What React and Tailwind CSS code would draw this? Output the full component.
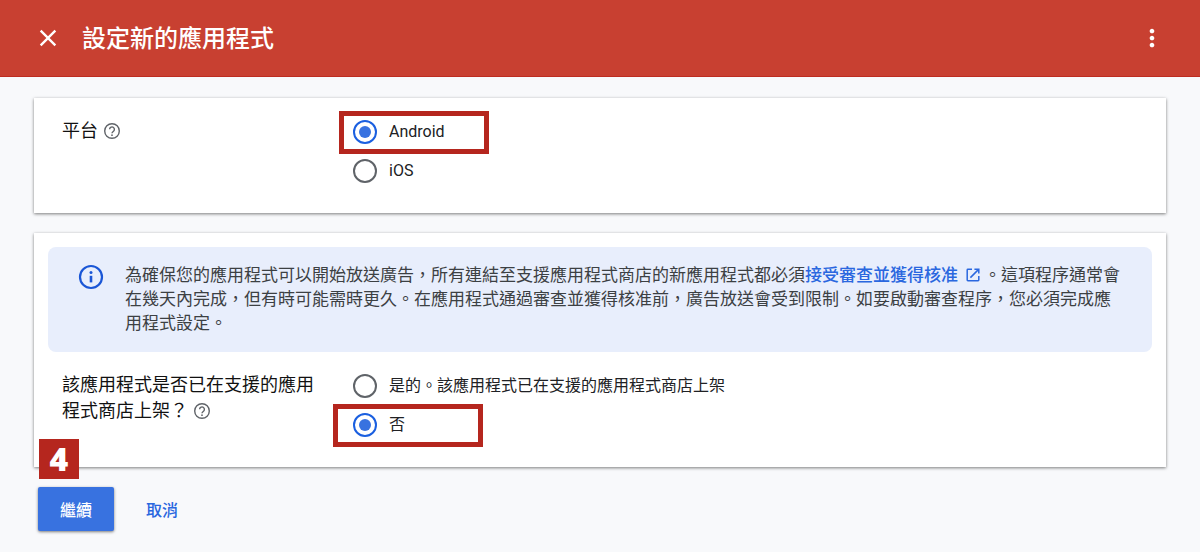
import { useState } from 'react';
import { MdClose, MdMoreVert } from 'react-icons/md';

function HelpIcon() {
  return (
    <svg viewBox="0 0 20 20" className="size-5" fill="none" stroke="currentColor" strokeWidth="1.4" aria-hidden="true">
      <circle cx="10" cy="10" r="7.3" />
      <path d="M7.6 8.3a2.4 2.4 0 1 1 4.1 1.7c-.9.8-1.7 1.2-1.7 2.3" />
      <circle cx="10" cy="14.2" r="0.85" fill="currentColor" stroke="none" />
    </svg>
  );
}

function InfoIcon() {
  return (
    <svg viewBox="0 0 28 28" className="size-7 shrink-0 text-[#1a56d6]" fill="none" stroke="currentColor" strokeWidth="2.2" aria-hidden="true">
      <circle cx="14" cy="14" r="11" />
      <path d="M14 12.8v6.6" strokeWidth="2.6" />
      <circle cx="14" cy="9.6" r="1.5" fill="currentColor" stroke="none" />
    </svg>
  );
}

function OpenIcon() {
  return (
    <svg viewBox="0 0 14 14" className="mr-1 ml-2 inline-block size-[14px] align-[-1px]" fill="none" stroke="currentColor" strokeWidth="1.5" aria-hidden="true">
      <path d="M6 1.2H1.9a.7.7 0 0 0-.7.7v10.2c0 .4.3.7.7.7h10.2c.4 0 .7-.3.7-.7V8" />
      <path d="M8.4 1.2h4.4v4.4M12.6 1.4 4.4 9.6" />
    </svg>
  );
}

function Radio({ name, value, selected, onSelect, children }) {
  return (
    <label className="flex h-6 w-fit items-center gap-3 text-[16px] leading-6 text-[#202124]">
      <input
        type="radio"
        name={name}
        value={value}
        checked={selected === value}
        onChange={() => onSelect(value)}
        className="size-6 shrink-0 appearance-none rounded-full border-2 border-[#5f6368] bg-clip-content p-1 checked:border-[#1a5fe0] checked:bg-[#3872e0]"
      />
      {children}
    </label>
  );
}

function Highlight() {
  return <div aria-hidden="true" className="pointer-events-none h-[43px] w-[150px] border-5 border-[#b5261e]" />;
}

function Help() {
  return (
    <button type="button" aria-label="說明" className="ml-1 inline-block align-[-4px] leading-none text-[#5f6368]">
      <HelpIcon />
    </button>
  );
}

function Card({ children }) {
  return (
    <section className="relative bg-white shadow-[0_1px_3px_rgba(0,0,0,0.5)]">{children}</section>
  );
}

function Field({ label, labelId, children }) {
  return (
    <div className="grid grid-cols-[267px_1fr] gap-6 px-7">
      <div id={labelId} className="text-[18px] leading-[26px] text-[#111]">
        {label}
        <Help />
      </div>
      <div role="radiogroup" aria-labelledby={labelId} className="flex flex-col gap-[15px] pt-0.5">
        {children}
      </div>
    </div>
  );
}

export default function App() {
  const [platform, setPlatform] = useState('android');
  const [listed, setListed] = useState('no');

  return (
    <div className="min-h-screen bg-[#f8f9fb] font-[Roboto,'Noto_Sans_CJK_TC',sans-serif]">
      <header className="flex h-[77px] items-center gap-5 border-b border-[#bd2c20] bg-[#c84031] px-[34px] text-white">
        <button type="button" aria-label="關閉">
          <MdClose className="size-7" />
        </button>
        <h1 className="flex-1 pt-0.5 text-[24px] leading-8 font-medium">設定新的應用程式</h1>
        <button type="button" aria-label="更多選項">
          <MdMoreVert className="size-7" />
        </button>
      </header>

      <main className="flex flex-col gap-5 px-[34px] pt-[21px]">
        <Card>
          <div className="pt-5 pb-[30px]">
            <Field label="平台" labelId="platform-label">
              <div className="relative">
                <div className="absolute -top-[9px] -left-[14px]">
                  <Highlight />
                </div>
                <Radio name="platform" value="android" selected={platform} onSelect={setPlatform}>
                  Android
                </Radio>
              </div>
              <Radio name="platform" value="ios" selected={platform} onSelect={setPlatform}>
                iOS
              </Radio>
            </Field>
          </div>
        </Card>

        <Card>
          <div className="flex flex-col gap-5 pt-[14px] pb-[30px]">
            <div className="mx-[14px] flex gap-5 rounded-lg bg-[#e8eefc] pt-4 pr-8 pb-[17px] pl-[29px]">
              <InfoIcon />
              <p className="text-[17px] leading-6 text-[#3c4043]">
                為確保您的應用程式可以開始放送廣告，所有連結至支援應用程式商店的新應用程式都必須
                <a href="#review" className="font-medium text-[#2a67df]">
                  接受審查並獲得核准
                  <OpenIcon />
                </a>
                。這項程序通常會在幾天內完成，但有時可能需時更久。在應用程式通過審查並獲得核准前，廣告放送會受到限制。如要啟動審查程序，您必須完成應用程式設定。
              </p>
            </div>
            <Field label="該應用程式是否已在支援的應用程式商店上架？" labelId="listed-label">
              <Radio name="listed" value="yes" selected={listed} onSelect={setListed}>
                是的。該應用程式已在支援的應用程式商店上架
              </Radio>
              <div className="relative">
                <div className="absolute -top-[9px] -left-5">
                  <Highlight />
                </div>
                <Radio name="listed" value="no" selected={listed} onSelect={setListed}>
                  否
                </Radio>
              </div>
            </Field>
          </div>
          <div className="absolute -bottom-3 left-[5px] flex size-10 items-center justify-center bg-[#b5261e] font-['Noto_Sans',sans-serif] text-[32px] leading-10 font-black text-white">
            4
          </div>
        </Card>

        <div className="flex gap-4 pb-5 pl-1 text-[16px] leading-6 font-medium">
          <button type="button" className="rounded-xs bg-[#3872e0] px-[22px] pt-3 pb-2 text-white shadow-[0_1px_3px_rgba(0,0,0,0.5)]">
            繼續
          </button>
          <button type="button" className="px-4 pt-3 pb-2 text-[#2a67df]">
            取消
          </button>
        </div>
      </main>
    </div>
  );
}
